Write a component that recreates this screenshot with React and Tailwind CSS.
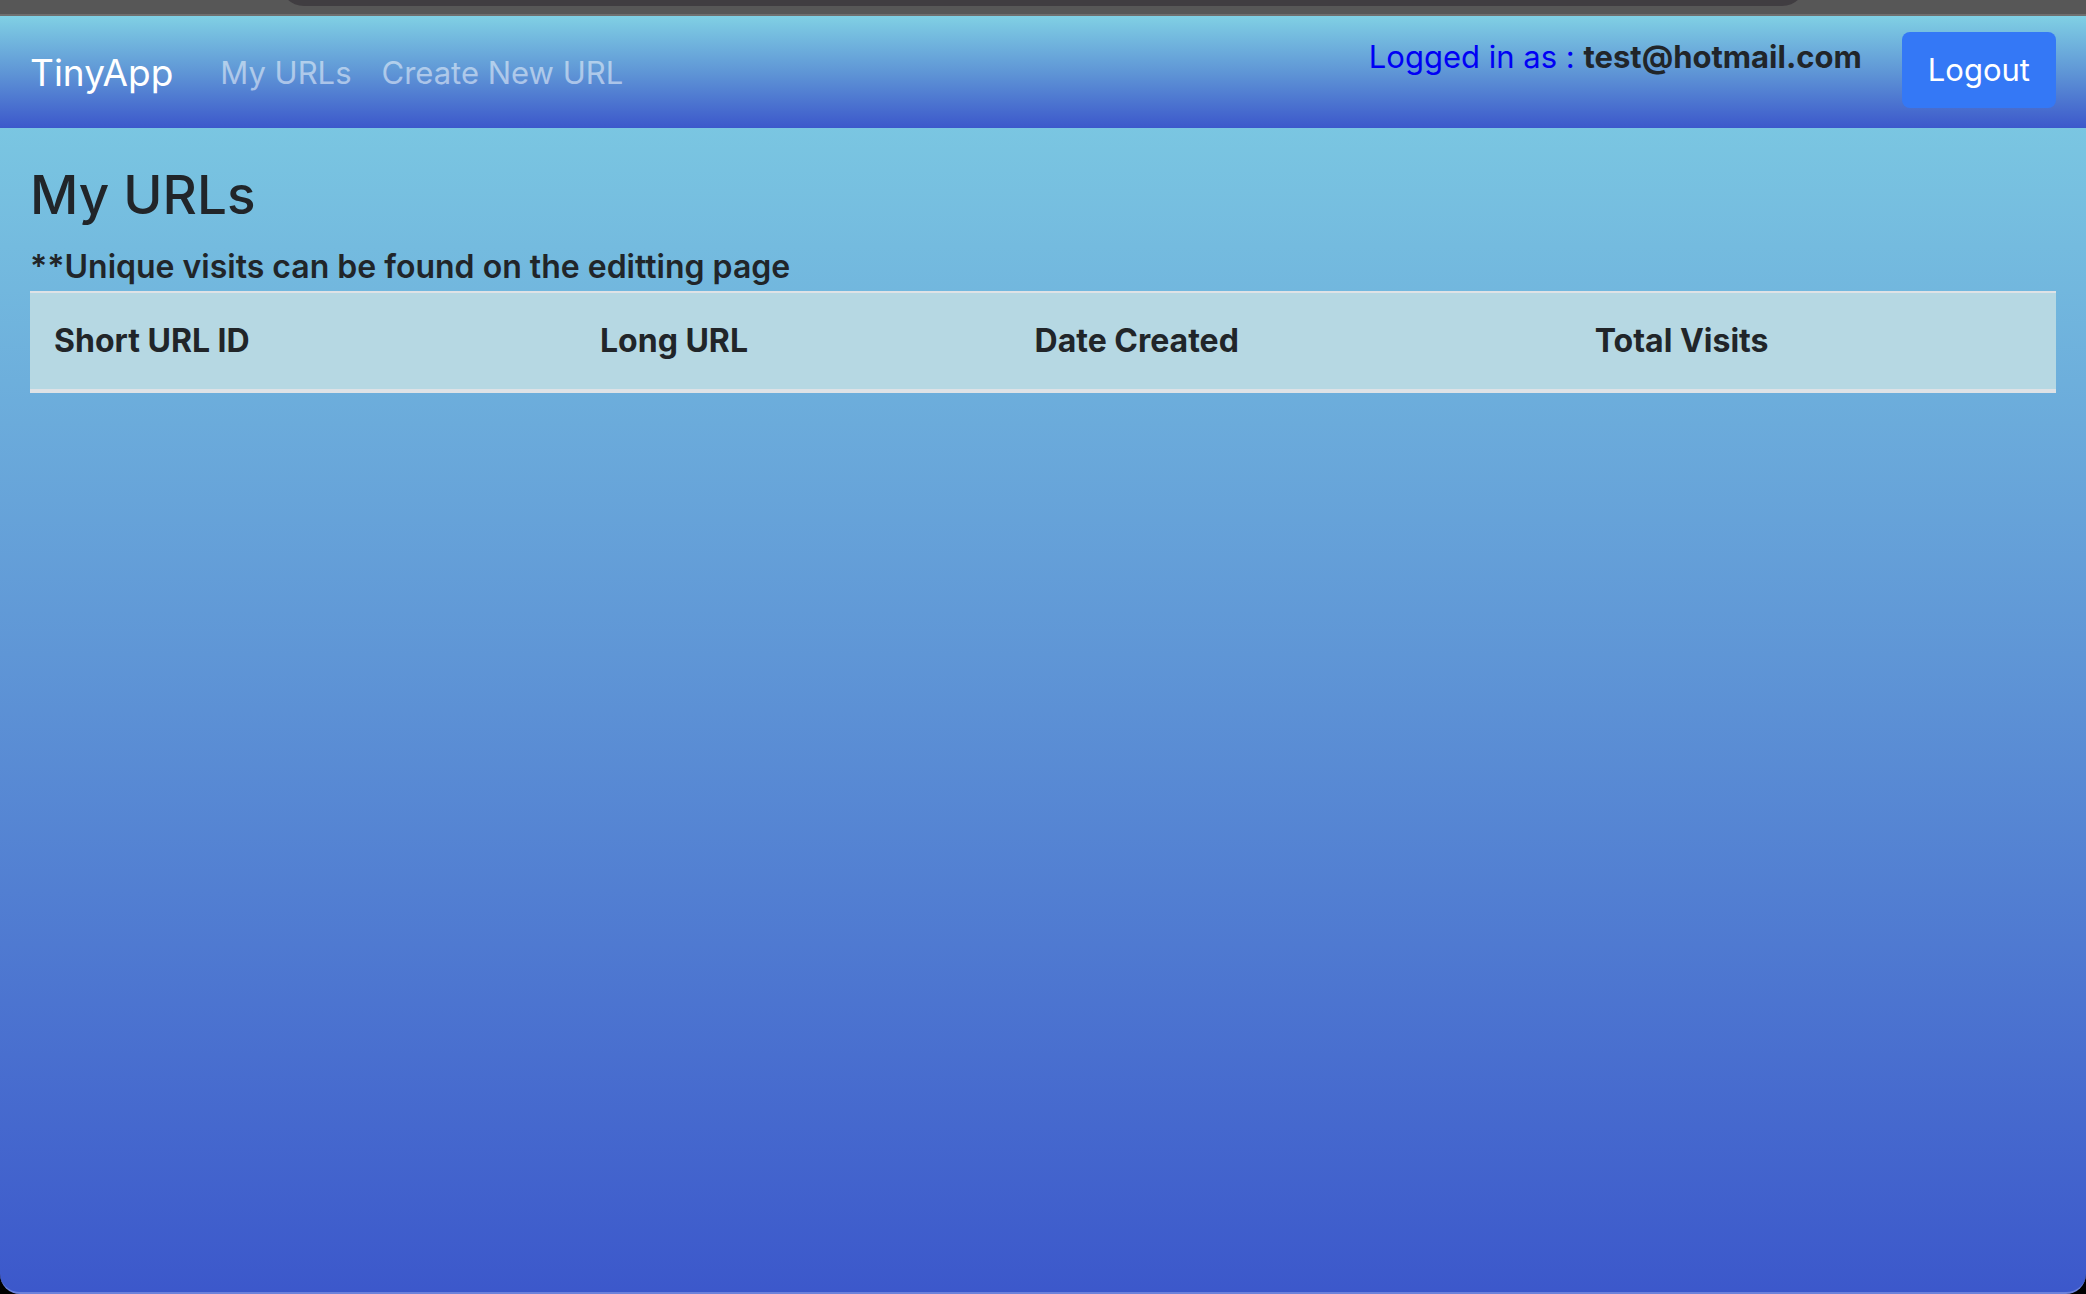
const columns = [
  { label: "Short URL ID", width: "w-[26.95%]" },
  { label: "Long URL", width: "w-[21.45%]" },
  { label: "Date Created", width: "w-[27.65%]" },
  { label: "Total Visits", width: "w-[23.95%]" },
];

function BrowserEdge() {
  return (
    <div className="flex h-4 flex-col justify-start overflow-hidden border-b-2 border-[#6f6f6f] bg-[#575757]">
      <div className="mx-[13.4%] -mt-[42px] h-12 shrink-0 rounded-b-3xl bg-[#403d41]" />
    </div>
  );
}

function Navbar() {
  return (
    <header className="flex h-28 items-start justify-between bg-linear-to-b/srgb from-[#80d0e4] via-[#5f96d6] to-[#3c58cb] px-[30px] py-4">
      <nav className="flex h-[82px] items-center">
        <a href="#home" className="mr-8 text-[37px] leading-[60px] text-white">
          TinyApp
        </a>
        <a href="#urls" className="px-[15px] py-4 text-[31px] leading-12 text-white/50">
          My URLs
        </a>
        <a href="#new" className="px-[15px] py-4 text-[31px] leading-12 text-white/50">
          Create New URL
        </a>
      </nav>
      <form className="flex items-start gap-10" onSubmit={(e) => e.preventDefault()}>
        <p className="text-[31px] leading-[50px] text-[#0000f5]">
          Logged in as : <b className="font-bold text-[#212529]">test@hotmail.com</b>
        </p>
        <button
          type="submit"
          className="rounded-lg bg-[#3478f6] px-[26px] py-3.5 text-[31px] leading-12 text-white"
        >
          Logout
        </button>
      </form>
    </header>
  );
}

export default function App() {
  return (
    <div className="flex min-h-screen flex-col bg-black font-[Inter,sans-serif] text-[#212529]">
      <BrowserEdge />
      <div className="flex grow flex-col rounded-b-[20px] border-b-2 border-[#6c82db] bg-linear-to-b/srgb from-[#80d0e4] via-[#5f96d6] to-[#3c58cb]">
        <Navbar />
        <main className="px-[30px] pt-8">
          <h1 className="mb-[13px] text-[53px] leading-[70px] font-medium">My URLs</h1>
          <p className="text-[32px] leading-12 font-semibold">
            **Unique visits can be found on the editting page
          </p>
          <table className="w-full table-fixed border-collapse bg-[#b6d8e3] text-left text-[32px] leading-12">
            <thead>
              <tr>
                {columns.map((c) => (
                  <th
                    key={c.label}
                    scope="col"
                    className={`${c.width} border-t-2 border-b-4 border-[#dee2e6] p-6 font-bold`}
                  >
                    {c.label}
                  </th>
                ))}
              </tr>
            </thead>
          </table>
        </main>
      </div>
    </div>
  );
}
